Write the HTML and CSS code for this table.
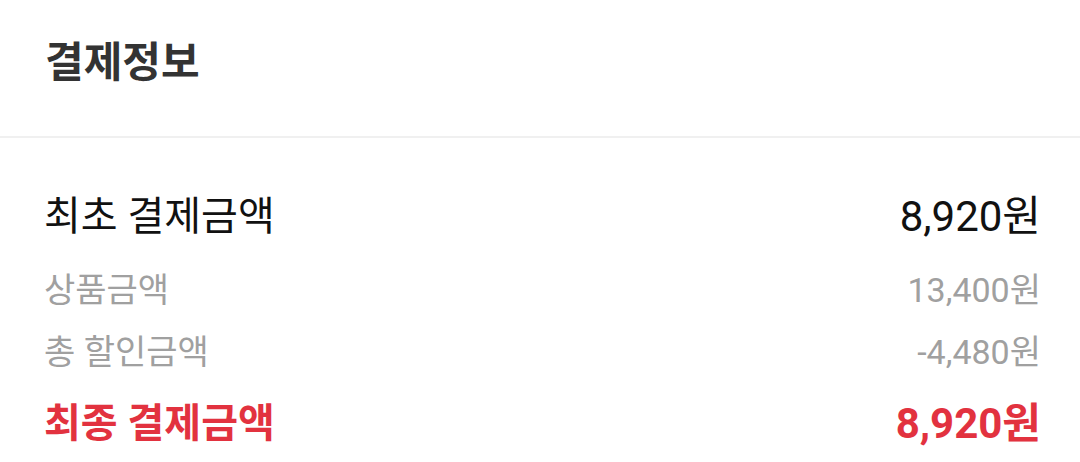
FILE: index.html
```html
<!DOCTYPE html>
<html lang="ko">
<head>
<meta charset="UTF-8" />
<title>결제정보</title>
<meta name="viewport" content="width=device-width, initial-scale=1" />
<link rel="stylesheet" href="styles.css">
</head>
<body>

<div class="head">
  <h2>결제정보</h2>
</div>

<div class="pay">
  <div class="row first">
    <span>최초 결제금액</span>
    <span class="num">8,920원</span>
  </div>
  <div class="row sub">
    <span>상품금액</span>
    <span class="num">13,400원</span>
  </div>
  <div class="row sub">
    <span>총 할인금액</span>
    <span class="num">-4,480원</span>
  </div>
  <div class="row total">
    <span>최종 결제금액</span>
    <span class="num">8,920원</span>
  </div>
</div>

</body>
</html>
```

FILE: styles.css
```css
body { margin:0; background:#fff; font-family: Roboto, "Noto Sans CJK KR", sans-serif; }
.head { padding:35px 45px 45px; border-bottom:2px solid #f0f0f0; }
.head h2 { margin:0; font-size:42px; line-height:56px; font-weight:700; color:#333; }
.pay { padding:54px 39px 0 44px; }
.row { display:flex; justify-content:space-between; align-items:center; }
.row.first { font-size:40px; line-height:50px; color:#111; margin-bottom:17px; }
.row.sub { font-size:34px; line-height:62px; color:#a0a0a0; }
.row.total { font-size:40px; line-height:50px; color:#e2323f; font-weight:700; margin-top:16px; }
.row .num { font-size:1.05em; }
.row.sub .num { font-size:1em; }
```
